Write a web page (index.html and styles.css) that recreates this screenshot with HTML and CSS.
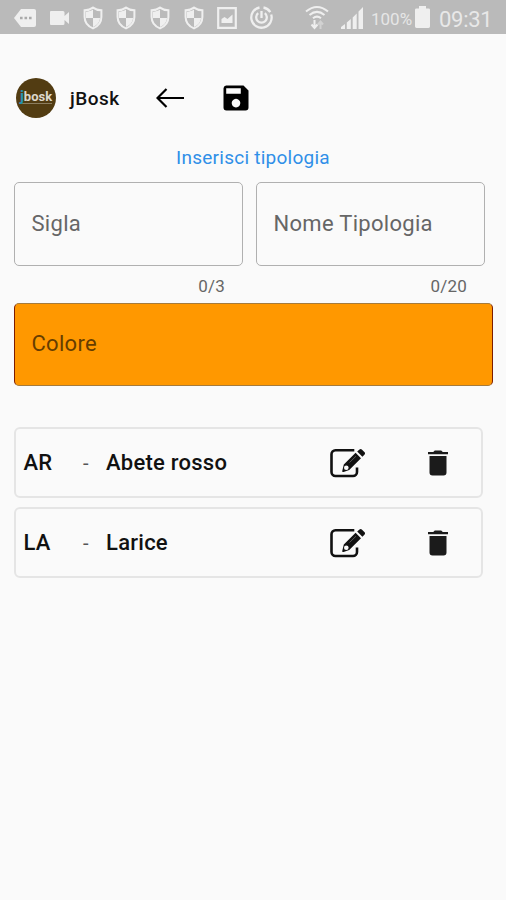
FILE: index.html
```html
<!DOCTYPE html>
<html lang="it">
<head>
<meta charset="utf-8">
<title>jBosk</title>
<link rel="stylesheet" href="styles.css">
</head>
<body>
<svg class="defs" width="0" height="0">
  <symbol id="shield" viewBox="0 0 20 24">
    <path d="M10 1.600C7.800 3.300 4.800 4.200 1.600 4.200V11c0 5.600 3.600 9.400 8.400 11.400 4.800-2 8.400-5.800 8.400-11.400V4.200C15.200 4.200 12.200 3.300 10 1.600z" fill="none" stroke="currentColor" stroke-width="2"/>
    <path d="M10 3.500V12H3V5.800c2.600-.2 5-1 7-2.300zM10 12h7c-.3 4.300-3 7.300-7 9z" fill="currentColor"/>
  </symbol>
  <symbol id="edit" viewBox="0 0 36 30">
    <path d="M24.300 2.200H5.500a4 4 0 0 0-4 4V24a4 4 0 0 0 4 4H23a4 4 0 0 0 4-4v-4.500" fill="none" stroke="currentColor" stroke-width="2.600"/>
    <path d="M13.800 16.600 25.600 4.800l5.400 5.400-11.800 11.900-5.600 1.900c-1 .3-1.600-.3-1.300-1.300z" fill="currentColor"/>
    <path d="M27.200 3.600 29.500 1.400c.7-.7 1.600-.7 2.300 0l2.800 2.800c.6.700.6 1.500 0 2.200l-2.200 2.300z" fill="currentColor"/>
    <circle cx="16.300" cy="19.800" r="2.300" fill="#fafafa"/>
    <path d="m19.500 14.500 6.500-6.300" stroke="#777" stroke-width=".7"/>
  </symbol>
  <symbol id="trash" viewBox="0 0 20 26">
    <path d="M0 2h5.200l1.600-1.500h6.400L14.800 2H20v2.200H0zM1.500 6h17v16.500a3 3 0 0 1-3 3h-11a3 3 0 0 1-3-3z" fill="currentColor"/>
  </symbol>
</svg>

<div class="status">
  <div class="notices">
    <span><svg width="22" height="18" viewBox="0 0 22 18"><path d="M7 0h13q2 0 2 2v14q0 2-2 2H7L0 9z" fill="currentColor"/><path d="M6 7.700h2.600v2.600H6zm4.500 0h2.600v2.600h-2.600zm4.500 0h2.600v2.600H15z" fill="#aaa"/></svg></span>
    <span><svg width="19" height="14" viewBox="0 0 19 14"><path d="M1 0h12q1.500 0 1.500 1.500V5L19 1v12l-4.500-4v3.500q0 1.500-1.500 1.500H1q-1 0-1-1V1q0-1 1-1z" fill="currentColor"/></svg></span>
    <span><svg width="20" height="24"><use href="#shield"/></svg></span>
    <span><svg width="20" height="24"><use href="#shield"/></svg></span>
    <span><svg width="20" height="24"><use href="#shield"/></svg></span>
    <span><svg width="20" height="24"><use href="#shield"/></svg></span>
    <span><svg width="20" height="22" viewBox="0 0 20 22"><path d="M1.200 1.200h17.600v19.600H1.200z" fill="none" stroke="currentColor" stroke-width="2.200"/><path d="M4.500 16v-4l3-2 3 2 5-4.500V16z" fill="currentColor"/></svg></span>
    <span><svg width="23" height="23" viewBox="0 0 23 23" fill="none" stroke="currentColor" stroke-width="2.300"><path d="M9.500 1.500a10.200 10.200 0 1 0 11.700 7M13.500 1.500a10.200 10.200 0 0 1 6.800 4.700M8.200 7.200a5.300 5.300 0 1 0 6.600 0M11.500 5v7"/></svg></span>
  </div>
  <svg class="wifi" width="24" height="25" viewBox="0 0 24 25" fill="none" stroke="currentColor" stroke-width="2"><path d="M1 6.500Q12-2.500 23 6.500M4.500 10Q12 3.800 19.500 10M8 13.300q4-3.300 8 0"/><path d="M9.500 15v7M6.500 19.500l3 3.500 3-3.500"/><path d="M15.500 24v-7m-2.500 2.500 2.500-3 2.500 3" stroke="#d2d2d2"/></svg>
  <svg class="signal" width="23" height="22" viewBox="0 0 23 22" fill="currentColor"><path d="M0 22v-2l4-3v5zM5.800 22v-6.500l4-3.500v10zM11.700 22V10.500l4-4V22zM17.500 22V4.500L22 0v22z"/></svg>
  <span class="percent">100%</span>
  <svg class="battery" width="15" height="22" viewBox="0 0 15 23" fill="currentColor" preserveAspectRatio="none"><path d="M4 0h7v2.500h2.500Q15 2.500 15 4v17.500q0 1.500-1.500 1.500h-12Q0 23 0 21.500V4q0-1.500 1.500-1.500H4z"/></svg>
  <span class="clock">09:31</span>
</div>

<header class="bar">
  <div class="logo"><span><i>j</i>bosk</span></div>
  <h1>jBosk</h1>
  <svg class="back" width="28" height="20" viewBox="0 0 28 20" fill="none" stroke="#000" stroke-width="2.200"><path d="M28 10H2M10.500 1l-9 9 9 9"/></svg>
  <svg class="save" width="26" height="26" viewBox="0 0 26 26"><path fill-rule="evenodd" d="M3 .500h17.500l5 5V22.500a3 3 0 0 1-3 3H3.500a3 3 0 0 1-3-3v-19a3 3 0 0 1 2.500-3zM3.200 3.300v5.500h14.600V3.300zM13 13.800a4.300 4.300 0 1 0 .01 0z"/></svg>
</header>

<main>
  <h2>Inserisci tipologia</h2>
  <div class="fields">
    <div class="field"><div class="box">Sigla</div><div class="count">0/3</div></div>
    <div class="field"><div class="box name">Nome Tipologia</div><div class="count">0/20</div></div>
  </div>
  <div class="box color">Colore</div>
  <ul>
    <li><b class="code">AR</b><span class="dash">-</span><b class="label">Abete rosso</b><svg class="edit" width="36" height="30"><use href="#edit"/></svg><svg class="trash" width="20" height="26"><use href="#trash"/></svg></li>
    <li><b class="code">LA</b><span class="dash">-</span><b class="label">Larice</b><svg class="edit" width="36" height="30"><use href="#edit"/></svg><svg class="trash" width="20" height="26"><use href="#trash"/></svg></li>
  </ul>
</main>
</body>
</html>
```
FILE: styles.css
```css
* { box-sizing: border-box; }
body {
  margin: 0;
  height: 900px;
  background: #fafafa;
  color: #111;
  font-family: Roboto, "Liberation Sans", sans-serif;
  overflow: hidden;
}
.defs { position: absolute; }
svg { flex: none; display: block; }

.status {
  display: flex;
  align-items: center;
  height: 34px;
  padding: 1px 0 0 8.5px;
  background: #bababa;
  color: #efefef;
}
.notices { display: flex; margin-right: 27px; }
.notices span {
  display: flex;
  align-items: center;
  justify-content: center;
  width: 33.7px;
  height: 30px;
}
.signal { margin-left: 12px; }
.percent { width: 51px; padding: 2px 0 0 7px; font-size: 17px; color: #e6e6e6; }
.battery { margin-top: -1px; }
.clock { margin: 3px 0 0 9px; font-size: 22px; letter-spacing: -.3px; color: #e8e8e8; }

.bar { display: flex; align-items: center; height: 128px; padding-left: 16px; }
.logo {
  display: flex;
  align-items: center;
  justify-content: center;
  width: 40px;
  height: 40px;
  border-radius: 50%;
  background: #523c12;
}
.logo span {
  margin-top: -2px;
  color: #ddd8cd;
  font-size: 13px;
  font-weight: 700;
  line-height: 12px;
  border-bottom: 1px solid #8c7d5f;
}
.logo i { color: #2492b5; font-size: 15px; font-style: normal; }
h1 { width: 85px; margin: 0; padding-left: 14px; font-size: 19px; font-weight: 500; letter-spacing: .5px; }
.back { margin-left: 14.5px; }
.save { margin-left: 39.5px; }

main { margin-top: -17px; padding: 0 14px; }
h2 {
  margin: 0;
  padding-top: 1px;
  color: #2f8fe8;
  font-size: 19px;
  font-weight: 400;
  line-height: 24px;
  text-align: center;
  letter-spacing: .25px;
}
.fields { display: flex; gap: 13px; margin: 12px 7px 0 0; }
.field { flex: 1; }
.box {
  display: flex;
  align-items: center;
  height: 84px;
  padding: 0 0 2px 16.5px;
  border: 1.500px solid #b0b0b0;
  border-radius: 5px;
  color: #666;
  font-size: 22px;
  letter-spacing: .3px;
}
.count { height: 37px; padding-right: 18px; color: #666; font-size: 17px; line-height: 40px; text-align: right; letter-spacing: .2px; }
.color {
  height: 83px;
  width: 479px;
  border-color: #a57b3d #7d1c00;
  background: #ff9800;
  color: #663d00;
}
ul { display: grid; gap: 9px; margin: 41px 9px 0 0; padding: 0; list-style: none; }
li {
  display: flex;
  align-items: center;
  height: 71px;
  padding-left: 7.5px;
  border: 2px solid #e5e5e5;
  border-radius: 6px;
  font-size: 22px;
}
li b { font-weight: 500; letter-spacing: .25px; }
.code { width: 59.5px; }
.dash { width: 23px; font-size: 20px; color: #555; }
.label { width: 223.5px; }
.trash { margin-left: 62px; color: #1b1b1b; }
```
